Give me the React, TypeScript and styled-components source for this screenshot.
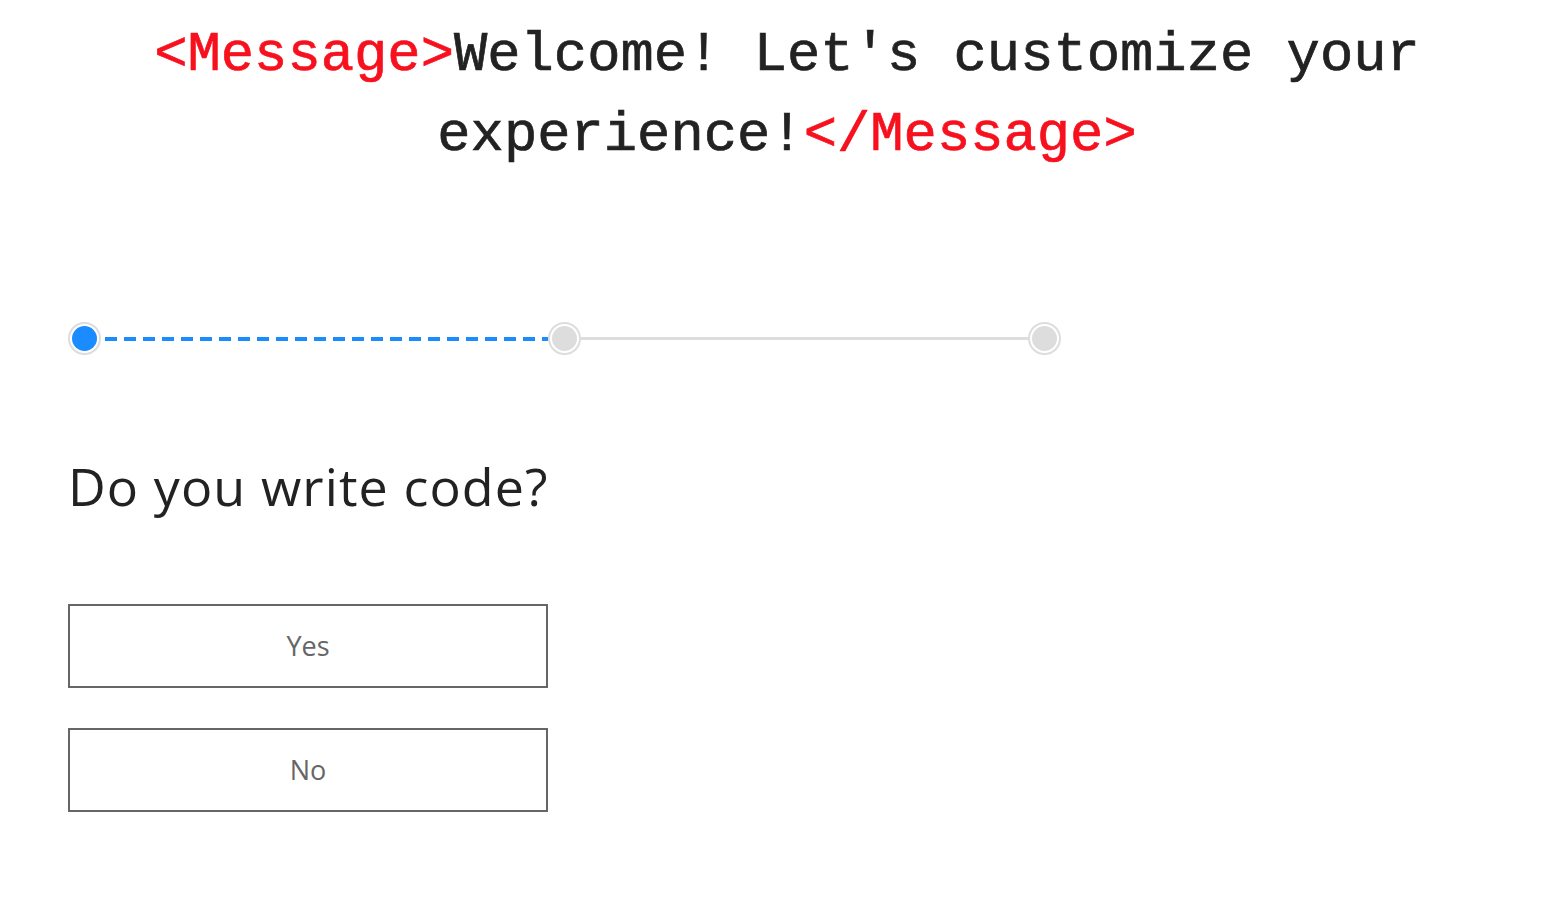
import React from "react";
import styled, { createGlobalStyle } from "styled-components";

const Global = createGlobalStyle`
  html, body { margin: 0; padding: 0; background: #fff; }
  body { font-family: "Open Sans", "Noto Sans", sans-serif; }
`;

const Page = styled.div`
  width: 1548px;
  min-height: 902px;
  box-sizing: border-box;
`;

const Header = styled.h1`
  margin: 0;
  padding: 16px 14px 0 40px;
  text-align: center;
  font-family: "Liberation Mono", "Courier New", monospace;
  font-weight: 400;
  font-size: 55.5px;
  line-height: 80px;
  color: #222;
  -webkit-text-stroke: 0.7px currentColor;
`;

const Tag = styled.span`
  color: #f7101d;
`;

const Content = styled.main`
  padding: 146px 0 0 68px;
`;

const Stepper = styled.div`
  display: flex;
  align-items: center;
`;

const Dot = styled.div<{ $active?: boolean }>`
  flex: none;
  width: 33px;
  height: 33px;
  box-sizing: border-box;
  border-radius: 50%;
  border: 2px solid #dddddd;
  padding: 2px;
  background: #fff;
  &::after {
    content: "";
    display: block;
    width: 100%;
    height: 100%;
    border-radius: 50%;
    background: ${(p) => (p.$active ? "#1a8cff" : "#dddddd")};
  }
`;

const Line = styled.div<{ $dashed?: boolean }>`
  flex: none;
  width: ${(p) => (p.$dashed ? "443px" : "447px")};
  margin-left: ${(p) => (p.$dashed ? "4px" : "0")};
  height: ${(p) => (p.$dashed ? "4px" : "3px")};
  background: ${(p) =>
    p.$dashed
      ? "repeating-linear-gradient(90deg, #1a8cff 0 12px, transparent 12px 19px)"
      : "#dddddd"};
`;

const Question = styled.h2`
  margin: 101px 0 0 0;
  font-family: "Open Sans", "Noto Sans", sans-serif;
  font-weight: 400;
  font-size: 52px;
  letter-spacing: 1.1px;
  line-height: 60px;
  color: #222;
`;

const Options = styled.div`
  display: flex;
  flex-direction: column;
  gap: 40px;
  margin-top: 88px;
`;

const Option = styled.button`
  width: 480px;
  height: 84px;
  box-sizing: border-box;
  border: 2px solid #666;
  background: #fff;
  color: #666;
  font-family: "Open Sans", "Noto Sans", sans-serif;
  font-size: 27px;
  padding: 0 0 2px;
  cursor: pointer;
`;

export default function App() {
  return (
    <Page>
      <Global />
      <Header>
        <Tag>&lt;Message&gt;</Tag>Welcome! Let's customize your experience!
        <Tag>&lt;/Message&gt;</Tag>
      </Header>
      <Content>
        <Stepper>
          <Dot $active />
          <Line $dashed />
          <Dot />
          <Line />
          <Dot />
        </Stepper>
        <Question>Do you write code?</Question>
        <Options>
          <Option>Yes</Option>
          <Option>No</Option>
        </Options>
      </Content>
    </Page>
  );
}
